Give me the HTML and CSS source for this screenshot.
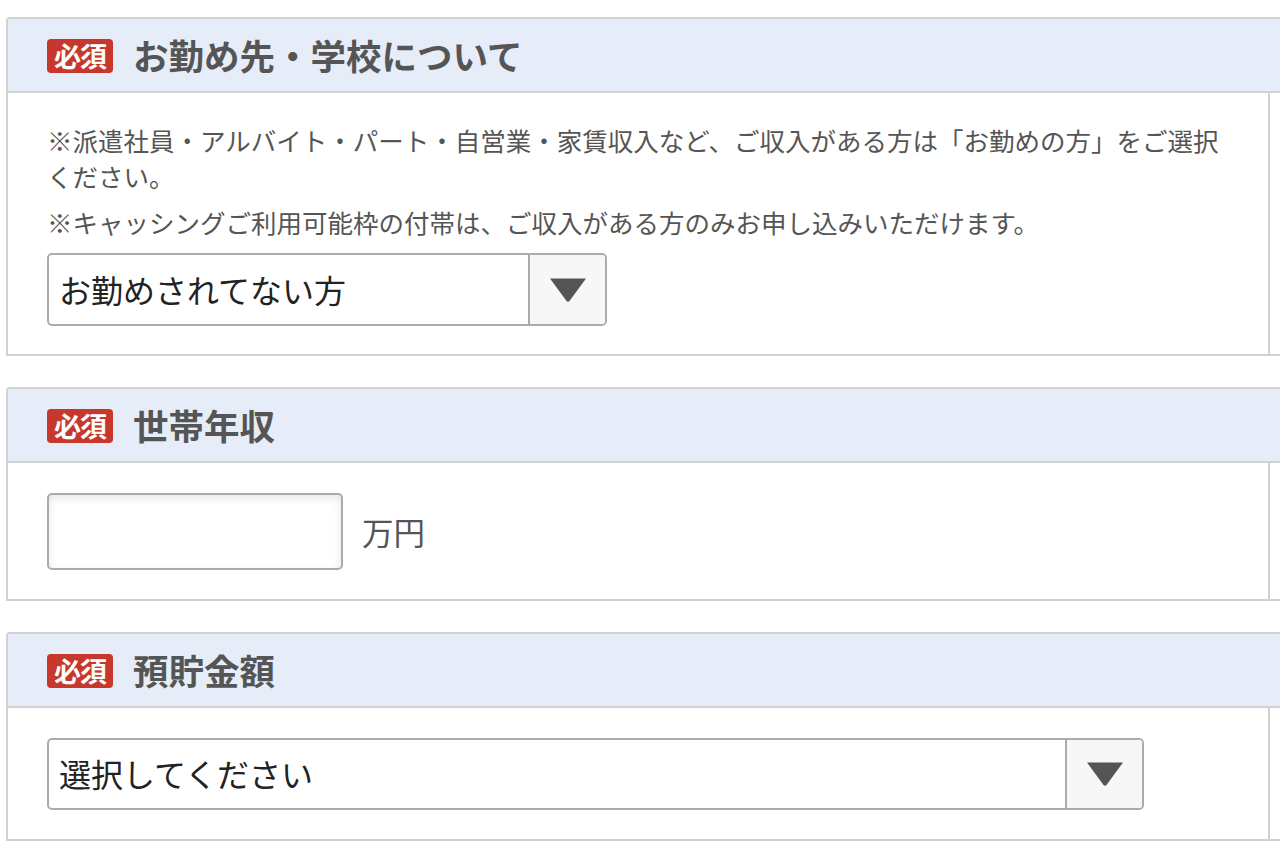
FILE: index.html
```
<!DOCTYPE html>
<html lang="ja">
<head>
<meta charset="utf-8">
<title>お申し込みフォーム</title>
<link rel="stylesheet" href="styles.css">
</head>
<body>
<main class="form">
  <section class="card">
    <header class="card-head">
      <span class="badge">必須</span>
      <h2 class="card-title">お勤め先・学校について</h2>
    </header>
    <div class="card-body">
      <div class="card-inner card-inner--notes">
        <p class="note">※派遣社員・アルバイト・パート・自営業・家賃収入など、ご収入がある方は「お勤めの方」をご選択ください。</p>
        <p class="note note--second">※キャッシングご利用可能枠の付帯は、ご収入がある方のみお申し込みいただけます。</p>
        <div class="select select--short">
          <span class="select-value">お勤めされてない方</span>
          <span class="select-arrow">
            <svg width="38" height="26" viewBox="0 0 38 26"><path d="M1 1.5 L37 1.5 L20.5 24 Q19 25.5 17.5 24 Z" fill="#555"/></svg>
          </span>
        </div>
      </div>
    </div>
  </section>

  <section class="card">
    <header class="card-head">
      <span class="badge">必須</span>
      <h2 class="card-title">世帯年収</h2>
    </header>
    <div class="card-body">
      <div class="card-inner card-inner--row">
        <input class="text-input" type="text" aria-label="世帯年収">
        <span class="unit">万円</span>
      </div>
    </div>
  </section>

  <section class="card">
    <header class="card-head">
      <span class="badge">必須</span>
      <h2 class="card-title">預貯金額</h2>
    </header>
    <div class="card-body">
      <div class="card-inner">
        <div class="select select--long">
          <span class="select-value">選択してください</span>
          <span class="select-arrow">
            <svg width="38" height="26" viewBox="0 0 38 26"><path d="M1 1.5 L37 1.5 L20.5 24 Q19 25.5 17.5 24 Z" fill="#555"/></svg>
          </span>
        </div>
      </div>
    </div>
  </section>
</main>
</body>
</html>
```
FILE: styles.css
```
html, body {
  margin: 0;
  padding: 0;
  background: #fff;
  overflow: hidden;
}
body {
  font-family: "Noto Sans CJK JP", "Noto Sans", sans-serif;
  color: #555;
}
.form {
  padding-top: 17px;
  padding-left: 6px;
  display: flex;
  flex-direction: column;
  gap: 31px;
}
.card {
  width: 1300px;
  border: 2px solid #d2d2d2;
  border-radius: 4px 0 0 0;
  box-sizing: border-box;
}
.card-head {
  height: 72px;
  background: #e6ecf8;
  border-bottom: 2px solid #d2d2d2;
  display: flex;
  align-items: center;
  padding-left: 39px;
  gap: 20px;
}
.badge {
  display: inline-flex;
  align-items: center;
  justify-content: center;
  width: 66px;
  height: 34px;
  background: #c8372b;
  color: #fff;
  border-radius: 4px;
  font-weight: 700;
  font-size: 27px;
  letter-spacing: -1px;
  line-height: 1;
  margin-top: 1px;
}
.card-title {
  margin: 0;
  font-size: 35.5px;
  font-weight: 700;
  color: #555;
  line-height: 1;
}
.card-body {
  display: flex;
}
.card-inner {
  width: 1262px;
  box-sizing: border-box;
  border-right: 2px solid #d2d2d2;
  padding: 30px 41px 29px 39px;
}
.card-inner--notes {
  padding-top: 29px;
  padding-bottom: 28px;
}
.card-inner--row {
  display: flex;
  align-items: center;
  gap: 19px;
  padding-bottom: 29px;
}
.note {
  margin: 0;
  font-size: 25.5px;
  line-height: 36px;
  color: #555;
}
.note--second {
  margin-top: 10px;
}
.select {
  margin-top: 13px;
  display: flex;
  height: 73px;
  box-sizing: border-box;
  border: 2px solid #ababab;
  border-radius: 5px;
  background: #fff;
  overflow: hidden;
}
.card-inner:not(.card-inner--notes) .select {
  margin-top: 0;
  height: 72px;
}
.select--short {
  width: 560px;
}
.select--long {
  width: 1097px;
}
.select-value {
  flex: 1;
  display: flex;
  align-items: center;
  padding-left: 10px;
  font-size: 32px;
  color: #222;
  padding-bottom: 2px;
}
.select-arrow {
  width: 75px;
  border-left: 2px solid #ababab;
  background: #f7f7f7;
  display: flex;
  align-items: center;
  justify-content: center;
}
.text-input {
  width: 296px;
  height: 77px;
  box-sizing: border-box;
  border: 2px solid #ababab;
  border-radius: 5px;
  box-shadow: inset 0 3px 8px rgba(0, 0, 0, 0.1);
  background: #fff;
  margin: 0;
  font-size: 30px;
  outline: none;
}
.unit {
  font-size: 31.5px;
  color: #555;
  padding-bottom: 2px;
}
```
